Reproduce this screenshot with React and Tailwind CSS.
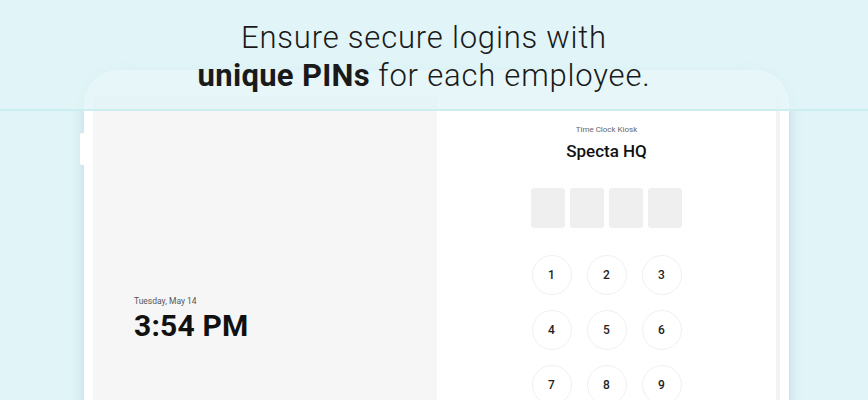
import React from 'react';

const keys = ['1', '2', '3', '4', '5', '6', '7', '8', '9', '', '0', ''];

export default function App() {
  return (
    <div className="relative w-[868px] h-[400px] overflow-hidden bg-[#e1f5f8] font-['Roboto',sans-serif]">
      {/* Tablet */}
      <div className="pt-[70px] pl-[84px]">
        <div className="relative w-[705px] h-[360px] bg-white rounded-t-[34px] shadow-[0_0_14px_rgba(120,170,180,0.35)] pt-[26px] pl-[9px] pr-[9px]">
          <div className="absolute left-[-4px] top-[63px] w-[5px] h-[32px] bg-white rounded-l-[2px]"></div>
          <div className="flex h-full border-r-[4px] border-[#f3f3f3]">
            {/* Clock side */}
            <div className="w-[344px] h-full bg-[#f6f6f6] flex flex-col pl-[41px] pt-[201px]">
              <span className="text-[8.5px] text-[#555] leading-none">Tuesday, May 14</span>
              <span className="mt-[5px] text-[30px] font-bold text-[#111] leading-none tracking-[0.2px]">3:54 PM</span>
            </div>
            {/* PIN side */}
            <div className="flex-1 h-full flex flex-col items-center pt-[30px]">
              <span className="text-[8px] text-[#666] leading-none">Time Clock Kiosk</span>
              <span className="mt-[9px] text-[17px] font-medium text-[#111] leading-none">Specta HQ</span>
              <div className="mt-[28px] flex gap-[5px]">
                {[0, 1, 2, 3].map((i) => (
                  <div key={i} className="w-[34px] h-[40px] rounded-[3px] bg-[#efefef]"></div>
                ))}
              </div>
              <div className="mt-[27px] grid grid-cols-3 gap-x-[15px] gap-y-[15px]">
                {keys.map((k, i) => (
                  <div
                    key={i}
                    className={`w-[40px] h-[40px] rounded-full flex items-center justify-center text-[12px] font-medium text-[#222] ${k ? 'border border-[#f0f0f0]' : ''}`}
                  >
                    {k}
                  </div>
                ))}
              </div>
            </div>
          </div>
        </div>
      </div>

      {/* Headline band */}
      <div className="absolute top-0 left-0 w-full h-[111px] bg-[#e1f5f8]/80 border-b-[2px] border-[#cdeef1] flex flex-col items-center pt-[19px] pr-[20px]">
        <p className="text-[31px] font-light text-[#1a1a1a] leading-[38px] text-center tracking-[0.8px]">
          Ensure secure logins with
          <br />
          <span className="font-bold tracking-[0.3px]">unique PINs</span> for each employee.
        </p>
      </div>
    </div>
  );
}
